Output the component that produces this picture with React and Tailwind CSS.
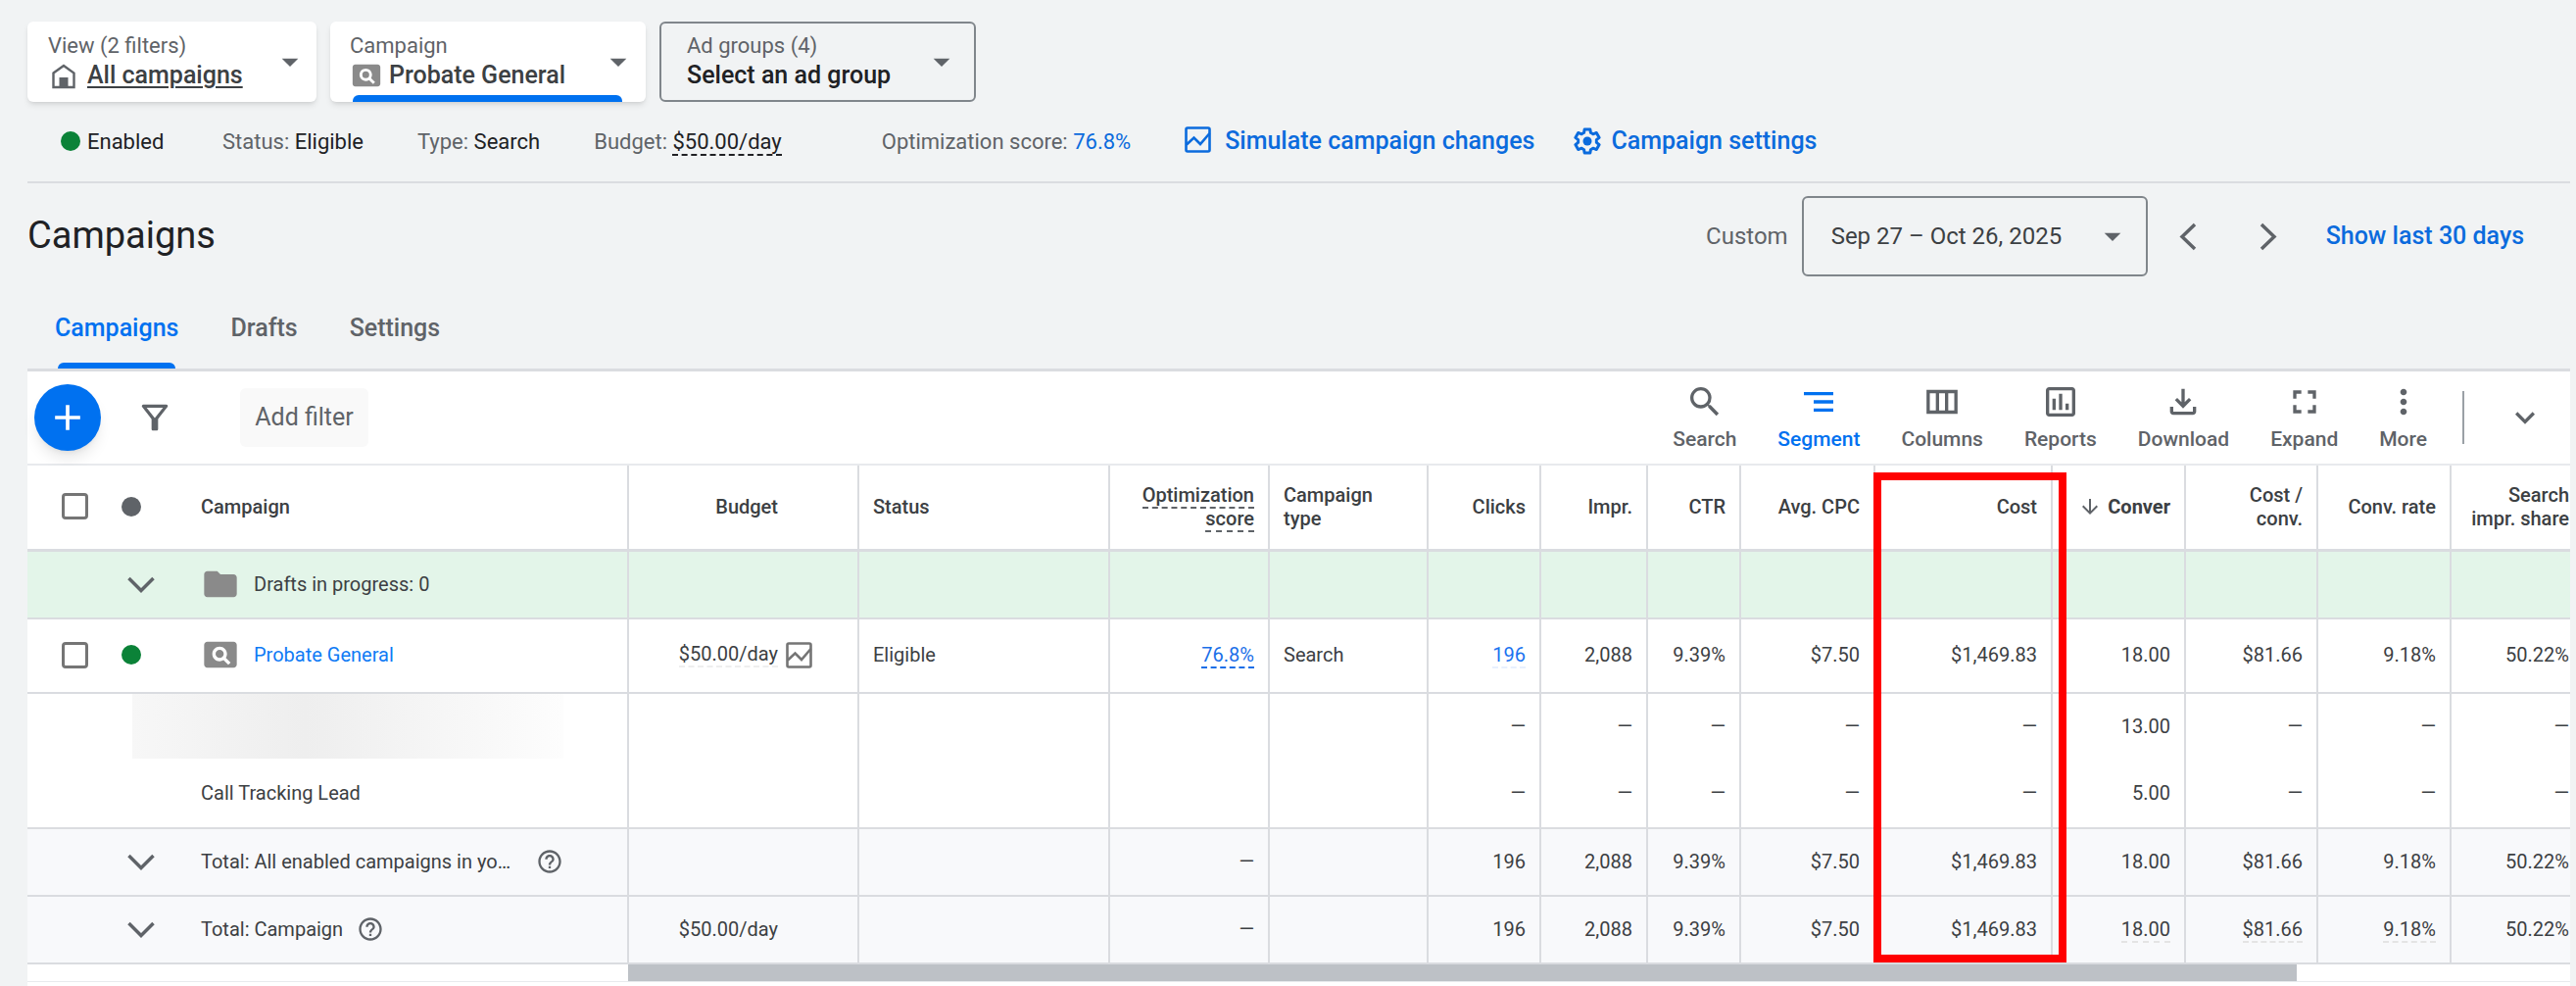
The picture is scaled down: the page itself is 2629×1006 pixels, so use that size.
import React from 'react'
import {
  MdAdd,
  MdArrowDownward,
  MdArrowDropDown,
  MdExpandMore,
  MdFolder,
  MdFullscreen,
  MdHelpOutline,
  MdMoreVert,
  MdOutlineAssessment,
  MdOutlineFileDownload,
  MdOutlineFilterAlt,
  MdPageview,
  MdSearch,
  MdSegment,
} from 'react-icons/md'

// three framed columns, drawn on the same 24 unit grid as the other tool icons
const ColumnsIcon = ({ className }) => (
  <svg viewBox="0 0 24 24" fill="none" stroke="currentColor" strokeWidth="2" className={className} aria-hidden="true">
    <path d="M3.500 5.700h17v12.600h-17zM9.200 5.700v12.600M14.800 5.700v12.600" />
  </svg>
)

const columns = [
  { key: 'budget', label: 'Budget', width: 'w-[235px]', head: 'text-right pr-[81px]', cell: 'text-right pr-[46px]' },
  { key: 'status', label: 'Status', width: 'w-[256px]', head: 'text-left pl-3.5', cell: 'text-left pl-3.5' },
  { key: 'score', label: 'Optimization score', width: 'w-[163px]', head: 'text-right pr-3.5', cell: 'text-right pr-3.5', dashed: true },
  { key: 'type', label: 'Campaign type', width: 'w-[162px]', head: 'text-left pl-3.5 pr-8', cell: 'text-left pl-3.5' },
  { key: 'clicks', label: 'Clicks', width: 'w-[115px]', head: 'text-right pr-3.5', cell: 'text-right pr-3.5' },
  { key: 'impr', label: 'Impr.', width: 'w-[109px]', head: 'text-right pr-3.5', cell: 'text-right pr-3.5' },
  { key: 'ctr', label: 'CTR', width: 'w-[95px]', head: 'text-right pr-3.5', cell: 'text-right pr-3.5' },
  { key: 'cpc', label: 'Avg. CPC', width: 'w-[137px]', head: 'text-right pr-3.5', cell: 'text-right pr-3.5' },
  { key: 'cost', label: 'Cost', width: 'w-[181px]', head: 'text-right pr-3.5', cell: 'text-right pr-3.5' },
  { key: 'conv', label: 'Conver', width: 'w-[136px]', head: 'text-right pr-3.5', cell: 'text-right pr-3.5', sorted: true },
  { key: 'costConv', label: 'Cost / conv.', width: 'w-[135px]', head: 'text-right pl-14 pr-3.5', cell: 'text-right pr-3.5' },
  { key: 'rate', label: 'Conv. rate', width: 'w-[136px]', head: 'text-right pr-3.5', cell: 'text-right pr-3.5' },
  { key: 'share', label: 'Search impr. share', width: 'w-[121px]', head: 'text-right pl-4 pr-px', cell: 'text-right pr-px' },
]

const metrics = {
  clicks: '196', impr: '2,088', ctr: '9.39%', cpc: '$7.50', cost: '$1,469.83',
  conv: '18.00', costConv: '$81.66', rate: '9.18%', share: '50.22%',
}

const empty = {
  clicks: '—', impr: '—', ctr: '—', cpc: '—', cost: '—',
  costConv: '—', rate: '—', share: '—',
}

const tools = [
  { label: 'Search', icon: MdSearch },
  { label: 'Segment', icon: MdSegment, active: true },
  { label: 'Columns', icon: ColumnsIcon },
  { label: 'Reports', icon: MdOutlineAssessment },
  { label: 'Download', icon: MdOutlineFileDownload },
  { label: 'Expand', icon: MdFullscreen },
  { label: 'More', icon: MdMoreVert },
]

const ChartBox = ({ className }) => (
  <svg viewBox="0 0 27 27" fill="none" stroke="currentColor" className={className} aria-hidden="true">
    <rect x="1.5" y="1.5" width="24" height="24" rx="1.5" strokeWidth="2.6" />
    <path d="M2 18.5l7.5-7 6.5 6.5L25.5 7" strokeWidth="2.6" />
  </svg>
)

const HomeIcon = () => (
  <svg viewBox="0 0 24 27" fill="none" className="w-6 h-[27px] shrink-0" aria-hidden="true">
    <path d="M1.5 10.5L12 3l10.500 7.500v14.500h-21z" stroke="#5f6368" strokeWidth="2.4" />
    <path d="M7.500 15h9v10.500h-9z" fill="#5f6368" />
  </svg>
)

const GearIcon = () => (
  <svg viewBox="0 0 24 24" className="size-9" aria-hidden="true">
    <path
      fill="none"
      stroke="currentColor"
      strokeWidth="2"
      strokeLinejoin="round"
      d="M18.200 12.900c.1-.6.1-1.200 0-1.800l1.900-1.500-1.900-3.300-2.300.9c-.5-.4-1-.7-1.600-.9L13.900 4h-3.800l-.4 2.300c-.6.2-1.100.5-1.600.9l-2.300-.9-1.900 3.300 1.900 1.500c-.1.6-.1 1.200 0 1.800l-1.900 1.500 1.900 3.300 2.300-.9c.5.4 1 .7 1.600.9l.4 2.300h3.800l.4-2.300c.6-.2 1.100-.5 1.600-.9l2.300.9 1.900-3.300z"
    />
    <circle cx="12" cy="12" r="3" fill="currentColor" />
  </svg>
)

const Arrow = ({ d }) => (
  <svg viewBox="0 0 50 50" fill="none" stroke="currentColor" strokeWidth="3.5" className="size-[50px]" aria-hidden="true">
    <path d={d} />
  </svg>
)

const Selector = ({ label, className, children }) => (
  <button type="button" className={`relative flex items-center justify-between h-[82px] rounded-md text-left ${className}`}>
    <span className="flex flex-col">
      <span className="text-[22px] leading-7 text-[#5f6368]">{label}</span>
      <span className="flex items-center h-8 text-[25px] leading-8 font-medium text-[#3c4043]">{children}</span>
    </span>
    <MdArrowDropDown className="size-10 text-[#5f6368]" />
  </button>
)

const Info = ({ label, children }) => (
  <span className="text-[#5f6368]">
    {label}: {children}
  </span>
)

const CheckBox = ({ label }) => (
  <input
    type="checkbox"
    aria-label={label}
    className="appearance-none block size-[27px] ml-[35px] mr-[34px] border-3 border-[#757575] rounded-sm bg-white"
  />
)

const Toggle = ({ label }) => (
  <button type="button" aria-label={label} className="block ml-[91px] mr-9 text-[#5f6368]">
    <Arrow d="M12.500 19L25 31.500 37.500 19" />
  </button>
)

const Row = ({ name, data, height, bg = 'bg-white', line = true }) => {
  const border = line ? 'border-b-2' : ''
  return (
    <tr className={`${height} ${bg}`}>
      <th scope="row" className={`p-0 pb-0.5 font-normal text-left border-r-2 border-[#dadce0] ${border}`}>
        <div className="flex items-center">{name}</div>
      </th>
      {columns.map((c) => (
        <td key={c.key} className={`p-0 pb-0.5 border-[#dadce0] ${c.key === 'share' ? '' : 'border-r-2'} ${border} ${c.cell}`}>
          {data[c.key]}
        </td>
      ))}
    </tr>
  )
}

const Budget = ({ icon, faint }) => (
  <span className="flex items-center justify-end gap-2">
    <span className={faint ? 'border-b-2 border-dashed border-[#eeeeee]' : ''}>$50.00/day</span>
    <span className="w-[27px]">{icon}</span>
  </span>
)

const Faint = ({ children }) => (
  <span className="border-b-2 border-dashed border-[#e4e4e4]">{children}</span>
)

const Header = () => (
  <header className="border-b-2 border-[#dadce0] pt-[22px] h-[187px]">
    <div className="flex gap-3.5">
      <Selector label="View (2 filters)" className="w-[295px] pl-[21px] pr-[7px] bg-white shadow-md">
        <span className="flex items-center pl-1 gap-3">
          <HomeIcon />
          <span className="underline underline-offset-3 decoration-2">All campaigns</span>
        </span>
      </Selector>
      <Selector label="Campaign" className="w-[322px] pl-5 pr-2 bg-white shadow-md">
        <MdPageview className="size-[34px] mr-1.5 text-[#8a8a8a]" />
        Probate General
        <span className="absolute left-[23px] right-6 bottom-0 h-[7px] bg-[#0071f0] rounded-t-md"></span>
      </Selector>
      <Selector label="Ad groups (4)" className="w-[323px] pl-[26px] pr-[13px] border-2 border-[#80868b]">
        <span className="text-[#202124]">Select an ad group</span>
      </Selector>
    </div>

    <div className="flex items-center mt-6 pl-[34px] h-8 text-[22px] text-[#202124]">
      <span className="flex items-center gap-[7px] w-[165px]">
        <span className="size-5 rounded-full bg-[#0b8238]"></span>
        Enabled
      </span>
      <div className="flex items-center gap-[55px]">
        <Info label="Status"><span className="text-[#202124]">Eligible</span></Info>
        <Info label="Type"><span className="text-[#202124]">Search</span></Info>
        <Info label="Budget"><span className="text-[#202124] border-b-2 border-dashed border-[#202124]">$50.00/day</span></Info>
      </div>
      <span className="ml-[102px]"><Info label="Optimization score"><a href="#score" className="text-[#0b6bdd]">76.8%</a></Info></span>
      <a href="#simulate" className="flex items-center gap-3.5 ml-[55px] text-[25px] font-medium text-[#0b6bdd]">
        <ChartBox className="size-[27px] mb-1" />
        Simulate campaign changes
      </a>
      <a href="#settings" className="flex items-center gap-1.5 ml-9 text-[25px] font-medium text-[#0b6bdd]">
        <GearIcon />
        Campaign settings
      </a>
    </div>
  </header>
)

const TitleBar = () => (
  <div className="flex items-center justify-between h-[107px] pr-[47px]">
    <h1 className="text-[38px] text-[#202124]">Campaigns</h1>
    <div className="flex items-center text-2xl text-[#5f6368]">
      <span>Custom</span>
      <button type="button" className="flex items-center justify-between ml-3.5 w-[353px] h-[82px] pl-7 pr-[14px] border-2 border-[#80868b] rounded-md text-[#3c4043]">
        Sep 27 – Oct 26, 2025
        <MdArrowDropDown className="size-10 text-[#5f6368]" />
      </button>
      <button type="button" aria-label="Previous period" className="ml-4"><Arrow d="M32 13L19 25.500l13 12.500" /></button>
      <button type="button" aria-label="Next period" className="ml-8"><Arrow d="M18 13l13 12.500L18 38" /></button>
      <a href="#last30" className="ml-[34px] text-[25px] font-medium text-[#0b6bdd]">Show last 30 days</a>
    </div>
  </div>
)

const Tabs = () => (
  <nav className="flex items-stretch gap-[53px] h-[85px] pl-7 border-b-3 border-[#dadce0] text-[25px] font-medium text-[#5f6368]">
    <a href="#campaigns" className="relative flex items-center text-[#0071f0]">
      Campaigns
      <span className="absolute inset-x-[3px] bottom-0 h-[6px] rounded-t-md bg-[#0071f0]"></span>
    </a>
    <a href="#drafts" className="flex items-center">Drafts</a>
    <a href="#settings-tab" className="flex items-center">Settings</a>
  </nav>
)

const Toolbar = () => (
  <div className="flex items-center h-24 pl-[7px] border-b-2 border-[#e8eaed] bg-white text-[#5f6368]">
    <button type="button" aria-label="New campaign" className="flex items-center justify-center size-[68px] rounded-full bg-[#0071f0] text-white shadow-lg">
      <MdAdd className="size-11" />
    </button>
    <button type="button" aria-label="Filter" className="ml-[35px]">
      <MdOutlineFilterAlt className="size-10" />
    </button>
    <button type="button" className="ml-[67px] h-[60px] w-[131px] rounded-md bg-[#f9f9f9] text-[25px]">Add filter</button>
    <div className="flex items-center gap-[42px] ml-auto">
      {tools.map(({ label, icon: Icon, active }) => (
        <button key={label} type="button" className={`flex flex-col items-center text-[21px] leading-7 font-medium ${active ? 'text-[#0071f0]' : ''}`}>
          <Icon className="size-10" />
          <span className="mt-1">{label}</span>
        </button>
      ))}
    </div>
    <span className="ml-9 w-0.5 h-[54px] bg-[#9aa0a6]"></span>
    <button type="button" aria-label="Collapse" className="ml-[42px] mr-[26px]"><MdExpandMore className="size-10" /></button>
  </div>
)

const CampaignTable = () => (
  <div className="relative">
    <table className="table-fixed w-full border-separate border-spacing-0 text-xl leading-6 text-[#3c4043]">
      <colgroup>
        <col />
        {columns.map((c) => <col key={c.key} className={c.width} />)}
      </colgroup>
      <thead>
        <tr className="h-[88px] bg-white">
          <th scope="col" className="p-0 pb-0.5 font-medium text-left border-r-2 border-b-3 border-[#dadce0]">
            <div className="flex items-center">
              <CheckBox label="Select all campaigns" />
              <span className="size-5 mr-[61px] rounded-full bg-[#5f6368]"></span>
              Campaign
            </div>
          </th>
          {columns.map((c) => (
            <th key={c.key} scope="col" className={`p-0 pb-0.5 font-medium border-b-3 border-[#dadce0] ${c.key === 'share' ? '' : 'border-r-2'} ${c.head}`}>
              {c.sorted ? (
                <span className="flex items-center justify-end gap-1.5 font-bold">
                  <MdArrowDownward className="size-6 text-[#5f6368]" />
                  {c.label}
                </span>
              ) : (
                <span className={c.dashed ? 'border-b-2 border-dashed border-[#5f6368]' : ''}>{c.label}</span>
              )}
            </th>
          ))}
        </tr>
      </thead>
      <tbody>
        <Row
          height="h-[69px]"
          bg="bg-[#e3f5e9]"
          data={{}}
          name={<><Toggle label="Show drafts" /><MdFolder className="size-10 mr-3.5 text-[#8a8a8a]" />Drafts in progress: 0</>}
        />
        <Row
          height="h-[76px]"
          data={{
            ...metrics,
            budget: <Budget faint icon={<ChartBox className="size-[27px] text-[#757575]" />} />,
            status: 'Eligible',
            score: <a href="#score" className="text-[#1a6fe8] border-b-2 border-dashed border-[#1a6fe8]">76.8%</a>,
            type: 'Search',
            clicks: <a href="#clicks" className="text-[#1a73f0] border-b-2 border-dashed border-[#e8f0fe]">196</a>,
          }}
          name={
            <>
              <CheckBox label="Select Probate General" />
              <span className="size-5 mr-[61px] rounded-full bg-[#0b8238]"></span>
              <MdPageview className="size-10 mr-3.5 text-[#8a8a8a]" />
              <a href="#probate" className="text-[#0f7bf5]">Probate General</a>
            </>
          }
        />
        <Row
          height="h-[68px]"
          line={false}
          data={{ ...empty, conv: '13.00' }}
          name={<span className="ml-[107px] w-[440px] h-[66px] bg-linear-to-r from-[#f7f7f7] via-[#eeeeee] via-40% to-[#fdfdfd]"></span>}
        />
        <Row
          height="h-[70px]"
          data={{ ...empty, conv: '5.00' }}
          name={<span className="pl-[177px]">Call Tracking Lead</span>}
        />
        <Row
          height="h-[69px]"
          bg="bg-[#f8f9fb]"
          data={{ ...metrics, score: '—' }}
          name={
            <>
              <Toggle label="Show totals for all campaigns" />
              <span className="w-80">Total: All enabled campaigns in yo…</span>
              <MdHelpOutline className="size-7 ml-[22px] text-[#5f6368]" />
            </>
          }
        />
        <Row
          height="h-[69px]"
          bg="bg-[#f8f9fb]"
          data={{
            ...metrics,
            budget: <Budget />,
            score: '—',
            conv: <Faint>18.00</Faint>,
            costConv: <Faint>$81.66</Faint>,
            rate: <Faint>9.18%</Faint>,
          }}
          name={
            <>
              <Toggle label="Show campaign totals" />
              Total: Campaign
              <MdHelpOutline className="size-7 ml-3.5 text-[#5f6368]" />
            </>
          }
        />
      </tbody>
    </table>
    {/* highlight around the cost column */}
    <div className="absolute top-[7px] bottom-0.5 right-[514px] w-[197px] border-8 border-[#ff0000] pointer-events-none"></div>
  </div>
)

export default function App() {
  return (
    <div className="min-h-screen flex flex-col bg-[#f1f3f4] pl-7 pr-1.5 font-[Roboto,sans-serif]">
      <Header />
      <TitleBar />
      <Tabs />
      <main className="flex-1 bg-white">
        <Toolbar />
        <CampaignTable />
        <div className="pl-[613px] pr-[279px] border-b border-[#e8eaed]">
          <div className="h-[17px] bg-[#bdc1c6]"></div>
        </div>
      </main>
    </div>
  )
}
